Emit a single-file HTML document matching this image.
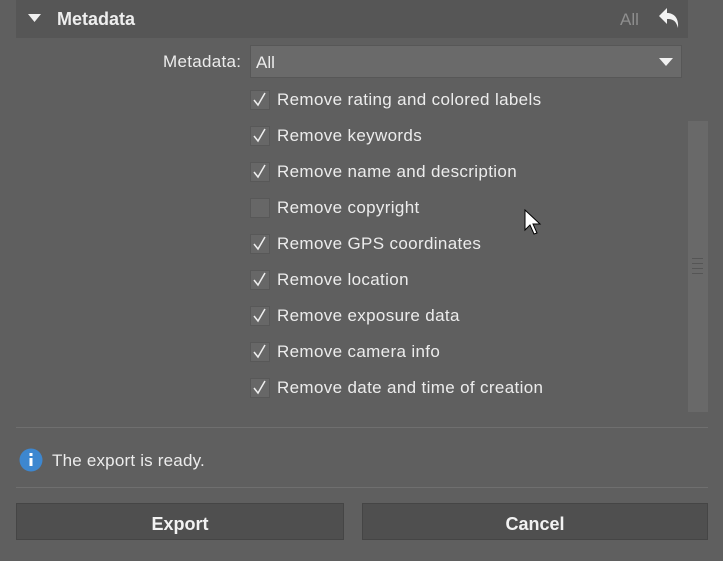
<!DOCTYPE html>
<html><head><style>
body{margin:0;width:723px;height:561px;background:#5f5f5f;font-family:"Liberation Sans",sans-serif;color:#ececec;position:relative;overflow:hidden}
.a{position:absolute}
.hdr{left:16px;top:0;width:672px;height:38px;background:#565656}
.cb{left:250px;width:20px;height:20px;background:#676767;border:1px solid #585858;box-sizing:border-box}
.lbl{left:277px;font-size:17px;line-height:20px;letter-spacing:0.35px}
.btn{top:503px;height:37px;background:#4f4f4f;border:1px solid #454545;box-sizing:border-box;font-weight:bold;font-size:18px;text-align:center;line-height:41px;color:#f2f2f2}
.ln{left:16px;width:692px;height:1px;background:#6f6f6f}
</style></head><body>
<div class="a hdr"></div>
<svg class="a" style="left:28px;top:14px" width="14" height="9"><path d="M0 0H13L6.5 8Z" fill="#f0f0f0"/></svg>
<div class="a" style="left:57px;top:9px;font-weight:bold;font-size:18px;color:#eee">Metadata</div>
<div class="a" style="left:620px;top:10px;font-size:17px;color:#8e8e8e">All</div>
<svg class="a" style="left:657px;top:6px" width="24" height="24" viewBox="0 0 24 24"><path d="M10 2L2 10L10 18V13C15 13 19 14 21 22C22 12 17 7 10 7Z" fill="#f2f2f2"/></svg>
<div class="a" style="left:163px;top:52px;font-size:17px;letter-spacing:0.3px">Metadata:</div>
<div class="a" style="left:250px;top:45px;width:432px;height:33px;background:#6a6a6a;border:1px solid #575757;box-sizing:border-box"></div>
<div class="a" style="left:256px;top:53px;font-size:17px">All</div>
<svg class="a" style="left:659px;top:58px" width="15" height="9"><path d="M0 0H14L7 8Z" fill="#f0f0f0"/></svg>
<div class="a" style="left:688px;top:121px;width:20px;height:291px;background:#696969"></div>
<div class="a" style="left:692px;top:258px;width:11px;height:1px;background:#555;box-shadow:0 5px #555,0 10px #555,0 15px #555"></div>

<div class="a cb" style="top:90px"></div><div class="a lbl" style="top:90px">Remove rating and colored labels</div>
<div class="a cb" style="top:126px"></div><div class="a lbl" style="top:126px">Remove keywords</div>
<div class="a cb" style="top:162px"></div><div class="a lbl" style="top:162px">Remove name and description</div>
<div class="a cb" style="top:198px"></div><div class="a lbl" style="top:198px">Remove copyright</div>
<div class="a cb" style="top:234px"></div><div class="a lbl" style="top:234px">Remove GPS coordinates</div>
<div class="a cb" style="top:270px"></div><div class="a lbl" style="top:270px">Remove location</div>
<div class="a cb" style="top:306px"></div><div class="a lbl" style="top:306px">Remove exposure data</div>
<div class="a cb" style="top:342px"></div><div class="a lbl" style="top:342px">Remove camera info</div>
<div class="a cb" style="top:378px"></div><div class="a lbl" style="top:378px">Remove date and time of creation</div>
<svg class="a" style="left:250px;top:90px" width="20" height="310">
<g fill="none" stroke="#eee" stroke-width="1.5">
<path d="M4 10L8 15L15 3"/><path d="M4 46L8 51L15 39"/><path d="M4 82L8 87L15 75"/>
<path d="M4 154L8 159L15 147"/><path d="M4 190L8 195L15 183"/><path d="M4 226L8 231L15 219"/><path d="M4 262L8 267L15 255"/><path d="M4 298L8 303L15 291"/></g></svg>
<svg class="a" style="left:524px;top:209px" width="20" height="28"><path d="M1 1V21L6 16L10 25L13 24L9 15H16Z" fill="#fff" stroke="#000" stroke-width="1"/></svg>

<div class="a ln" style="top:427px"></div>
<svg class="a" style="left:19px;top:448px" width="24" height="24"><circle cx="12" cy="12" r="11.5" fill="#3d87d0"/><rect x="10.5" y="10" width="3" height="8" fill="#fff"/><rect x="10.5" y="5" width="3" height="3" fill="#fff"/></svg>
<div class="a" style="left:52px;top:451px;font-size:17px;letter-spacing:0.2px">The export is ready.</div>
<div class="a ln" style="top:487px"></div>
<div class="a btn" style="left:16px;width:328px">Export</div>
<div class="a btn" style="left:362px;width:346px">Cancel</div>
</body></html>
